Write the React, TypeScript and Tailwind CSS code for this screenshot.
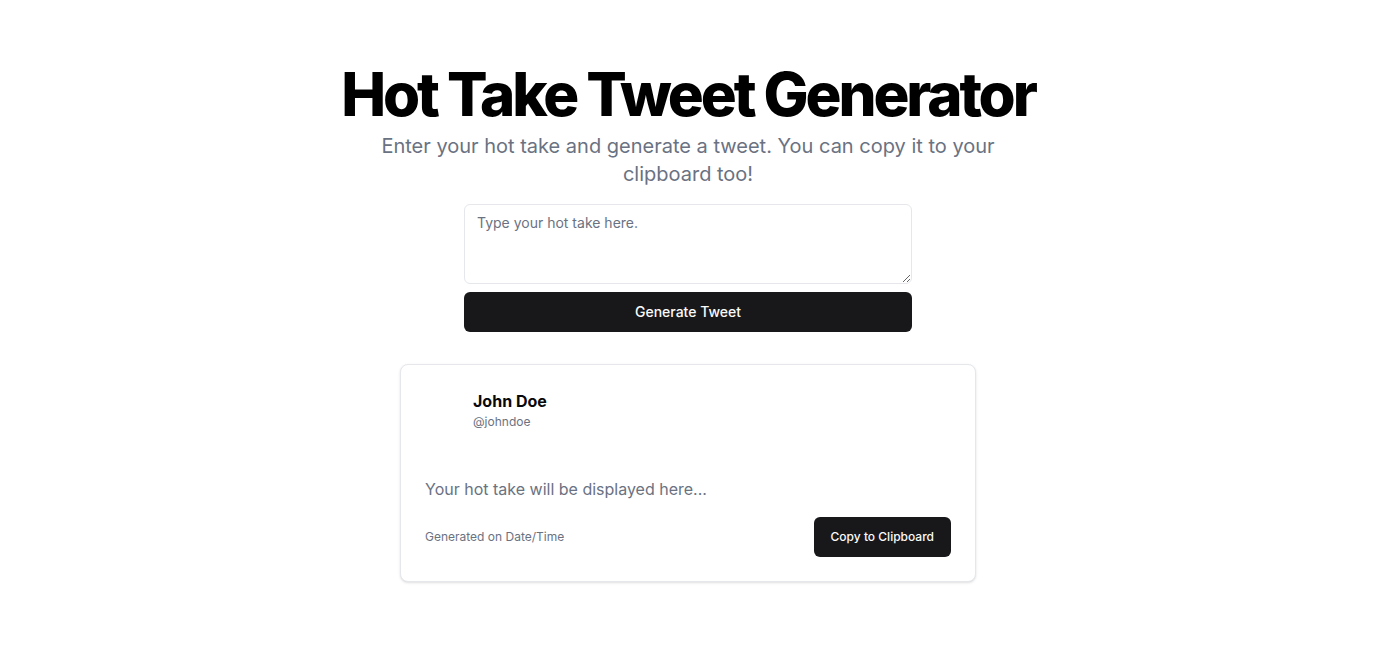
export default function App() {
  return (
    <div
      className="min-h-screen bg-white flex flex-col items-center pt-16 px-4"
      style={{ fontFamily: "Inter, 'Noto Sans', sans-serif" }}
    >
      <h1 className="text-6xl leading-none font-extrabold tracking-[-0.052em] text-black">
        Hot Take Tweet Generator
      </h1>
      <p className="mt-2 max-w-2xl text-center text-xl leading-7 text-gray-500">
        Enter your hot take and generate a tweet. You can copy it to your
        clipboard too!
      </p>

      <div className="mt-4 w-full max-w-md flex flex-col gap-2">
        <textarea
          placeholder="Type your hot take here."
          className="min-h-[80px] w-full rounded-md border border-gray-200 px-3 py-2 text-sm placeholder:text-gray-500 outline-none"
        />
        <button className="h-10 w-full rounded-md bg-zinc-900 text-sm font-medium text-zinc-50">
          Generate Tweet
        </button>
      </div>

      <div className="mt-8 w-full max-w-xl rounded-lg border border-gray-200 bg-white shadow-sm">
        {/* header */}
        <div className="flex gap-2 px-6 pt-6">
          <div className="h-10 w-10 shrink-0" />
          <div className="flex flex-col">
            <span className="text-base font-bold leading-6 text-zinc-950">
              John Doe
            </span>
            <span className="mt-px text-xs leading-4 text-gray-500">
              @johndoe
            </span>
          </div>
        </div>

        {/* content */}
        <div className="px-6 pt-[45px]">
          <p className="text-base leading-7 text-gray-500">
            Your hot take will be displayed here...
          </p>
        </div>

        {/* footer */}
        <div className="flex items-center justify-between px-6 pt-[14px] pb-6">
          <span className="text-xs text-gray-500">Generated on Date/Time</span>
          <button className="h-10 rounded-md bg-zinc-900 px-[17px] text-xs font-medium text-zinc-50">
            Copy to Clipboard
          </button>
        </div>
      </div>
    </div>
  );
}
